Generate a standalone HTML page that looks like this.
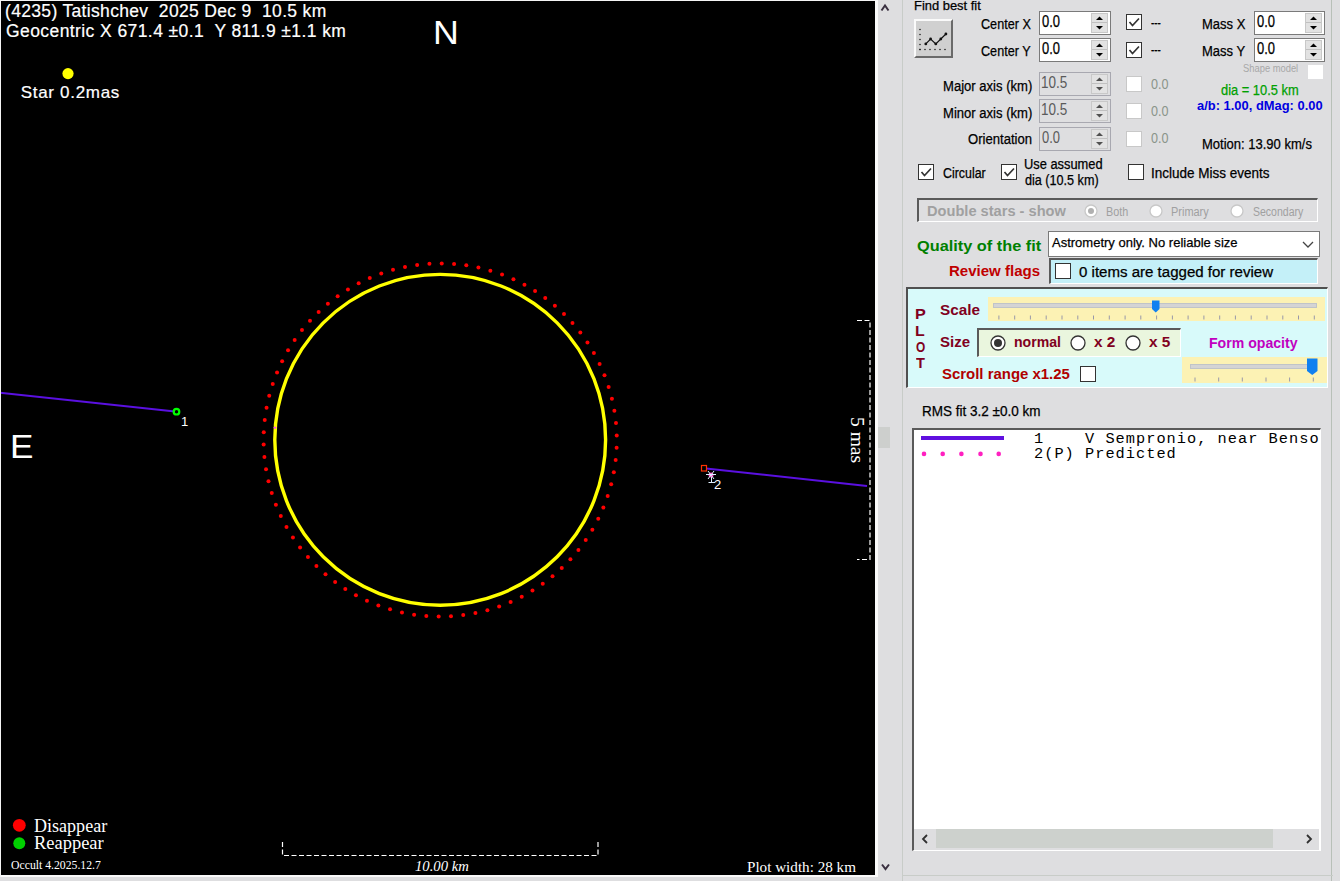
<!DOCTYPE html><html><head><meta charset="utf-8"><style>
html,body{margin:0;padding:0;width:1340px;height:881px;overflow:hidden;background:#dedee0;position:relative}
.t{position:absolute;white-space:pre}
</style></head><body>
<svg style="position:absolute;left:0;top:0" width="1340" height="881"><rect x="1" y="1" width="874" height="874" fill="#000"/><circle cx="440.2" cy="439.8" r="165.4" fill="none" stroke="#ffff00" stroke-width="3.4"/><circle cx="616.63" cy="447.70" r="2.0" fill="#ff0000"/><circle cx="615.66" cy="459.99" r="2.0" fill="#ff0000"/><circle cx="613.84" cy="472.18" r="2.0" fill="#ff0000"/><circle cx="611.17" cy="484.22" r="2.0" fill="#ff0000"/><circle cx="607.67" cy="496.04" r="2.0" fill="#ff0000"/><circle cx="603.36" cy="507.58" r="2.0" fill="#ff0000"/><circle cx="598.25" cy="518.80" r="2.0" fill="#ff0000"/><circle cx="592.36" cy="529.63" r="2.0" fill="#ff0000"/><circle cx="585.74" cy="540.03" r="2.0" fill="#ff0000"/><circle cx="578.41" cy="549.94" r="2.0" fill="#ff0000"/><circle cx="570.40" cy="559.31" r="2.0" fill="#ff0000"/><circle cx="561.76" cy="568.10" r="2.0" fill="#ff0000"/><circle cx="552.53" cy="576.27" r="2.0" fill="#ff0000"/><circle cx="542.75" cy="583.77" r="2.0" fill="#ff0000"/><circle cx="532.47" cy="590.58" r="2.0" fill="#ff0000"/><circle cx="521.74" cy="596.65" r="2.0" fill="#ff0000"/><circle cx="510.62" cy="601.95" r="2.0" fill="#ff0000"/><circle cx="499.15" cy="606.47" r="2.0" fill="#ff0000"/><circle cx="487.39" cy="610.18" r="2.0" fill="#ff0000"/><circle cx="475.41" cy="613.05" r="2.0" fill="#ff0000"/><circle cx="463.25" cy="615.09" r="2.0" fill="#ff0000"/><circle cx="450.98" cy="616.27" r="2.0" fill="#ff0000"/><circle cx="438.66" cy="616.59" r="2.0" fill="#ff0000"/><circle cx="426.34" cy="616.06" r="2.0" fill="#ff0000"/><circle cx="414.10" cy="614.66" r="2.0" fill="#ff0000"/><circle cx="401.98" cy="612.41" r="2.0" fill="#ff0000"/><circle cx="390.04" cy="609.33" r="2.0" fill="#ff0000"/><circle cx="378.35" cy="605.42" r="2.0" fill="#ff0000"/><circle cx="366.97" cy="600.70" r="2.0" fill="#ff0000"/><circle cx="355.93" cy="595.20" r="2.0" fill="#ff0000"/><circle cx="345.31" cy="588.94" r="2.0" fill="#ff0000"/><circle cx="335.15" cy="581.96" r="2.0" fill="#ff0000"/><circle cx="325.51" cy="574.29" r="2.0" fill="#ff0000"/><circle cx="316.42" cy="565.96" r="2.0" fill="#ff0000"/><circle cx="307.93" cy="557.02" r="2.0" fill="#ff0000"/><circle cx="300.09" cy="547.51" r="2.0" fill="#ff0000"/><circle cx="292.94" cy="537.47" r="2.0" fill="#ff0000"/><circle cx="286.50" cy="526.96" r="2.0" fill="#ff0000"/><circle cx="280.80" cy="516.03" r="2.0" fill="#ff0000"/><circle cx="275.89" cy="504.72" r="2.0" fill="#ff0000"/><circle cx="271.77" cy="493.10" r="2.0" fill="#ff0000"/><circle cx="268.48" cy="481.23" r="2.0" fill="#ff0000"/><circle cx="266.02" cy="469.15" r="2.0" fill="#ff0000"/><circle cx="264.41" cy="456.93" r="2.0" fill="#ff0000"/><circle cx="263.66" cy="444.62" r="2.0" fill="#ff0000"/><circle cx="263.77" cy="432.30" r="2.0" fill="#ff0000"/><circle cx="264.74" cy="420.01" r="2.0" fill="#ff0000"/><circle cx="266.56" cy="407.82" r="2.0" fill="#ff0000"/><circle cx="269.23" cy="395.78" r="2.0" fill="#ff0000"/><circle cx="272.73" cy="383.96" r="2.0" fill="#ff0000"/><circle cx="277.04" cy="372.42" r="2.0" fill="#ff0000"/><circle cx="282.15" cy="361.20" r="2.0" fill="#ff0000"/><circle cx="288.04" cy="350.37" r="2.0" fill="#ff0000"/><circle cx="294.66" cy="339.97" r="2.0" fill="#ff0000"/><circle cx="301.99" cy="330.06" r="2.0" fill="#ff0000"/><circle cx="310.00" cy="320.69" r="2.0" fill="#ff0000"/><circle cx="318.64" cy="311.90" r="2.0" fill="#ff0000"/><circle cx="327.87" cy="303.73" r="2.0" fill="#ff0000"/><circle cx="337.65" cy="296.23" r="2.0" fill="#ff0000"/><circle cx="347.93" cy="289.42" r="2.0" fill="#ff0000"/><circle cx="358.66" cy="283.35" r="2.0" fill="#ff0000"/><circle cx="369.78" cy="278.05" r="2.0" fill="#ff0000"/><circle cx="381.25" cy="273.53" r="2.0" fill="#ff0000"/><circle cx="393.01" cy="269.82" r="2.0" fill="#ff0000"/><circle cx="404.99" cy="266.95" r="2.0" fill="#ff0000"/><circle cx="417.15" cy="264.91" r="2.0" fill="#ff0000"/><circle cx="429.42" cy="263.73" r="2.0" fill="#ff0000"/><circle cx="441.74" cy="263.41" r="2.0" fill="#ff0000"/><circle cx="454.06" cy="263.94" r="2.0" fill="#ff0000"/><circle cx="466.30" cy="265.34" r="2.0" fill="#ff0000"/><circle cx="478.42" cy="267.59" r="2.0" fill="#ff0000"/><circle cx="490.36" cy="270.67" r="2.0" fill="#ff0000"/><circle cx="502.05" cy="274.58" r="2.0" fill="#ff0000"/><circle cx="513.43" cy="279.30" r="2.0" fill="#ff0000"/><circle cx="524.47" cy="284.80" r="2.0" fill="#ff0000"/><circle cx="535.09" cy="291.06" r="2.0" fill="#ff0000"/><circle cx="545.25" cy="298.04" r="2.0" fill="#ff0000"/><circle cx="554.89" cy="305.71" r="2.0" fill="#ff0000"/><circle cx="563.98" cy="314.04" r="2.0" fill="#ff0000"/><circle cx="572.47" cy="322.98" r="2.0" fill="#ff0000"/><circle cx="580.31" cy="332.49" r="2.0" fill="#ff0000"/><circle cx="587.46" cy="342.53" r="2.0" fill="#ff0000"/><circle cx="593.90" cy="353.04" r="2.0" fill="#ff0000"/><circle cx="599.60" cy="363.97" r="2.0" fill="#ff0000"/><circle cx="604.51" cy="375.28" r="2.0" fill="#ff0000"/><circle cx="608.63" cy="386.90" r="2.0" fill="#ff0000"/><circle cx="611.92" cy="398.77" r="2.0" fill="#ff0000"/><circle cx="614.38" cy="410.85" r="2.0" fill="#ff0000"/><circle cx="615.99" cy="423.07" r="2.0" fill="#ff0000"/><circle cx="616.74" cy="435.38" r="2.0" fill="#ff0000"/><path d="M273.5 427.7 h3 M275 426.5 v2.5" stroke="#ff40ff" stroke-width="1"/><line x1="0" y1="392.8" x2="175" y2="411.5" stroke="#5a10e0" stroke-width="2"/><circle cx="176.5" cy="411.7" r="2.8" fill="none" stroke="#00ff00" stroke-width="2.2"/><line x1="706" y1="468.5" x2="867" y2="486" stroke="#5a10e0" stroke-width="2"/><rect x="701.5" y="465.5" width="5" height="5.5" fill="none" stroke="#ff3000" stroke-width="1.2"/><circle cx="711" cy="475" r="2.5" fill="#ff40c0"/><path d="M706 474.5 H716 M708 471 L714 479 M714 471 L708 479 M711.5 477 V482.5 M708.5 482.5 H715" stroke="#e0f0ff" stroke-width="1"/><circle cx="68" cy="73.6" r="5.6" fill="#ffff00"/><circle cx="19.3" cy="825.3" r="6.4" fill="#ff0000"/><circle cx="19.3" cy="843.3" r="6" fill="#00d000"/><path d="M282.5 842 V855.5 H598 V842" fill="none" stroke="#fff" stroke-width="1.2" stroke-dasharray="5 2.5"/><path d="M857 320.5 H870 V559.5 H857" fill="none" stroke="#fff" stroke-width="1.2" stroke-dasharray="5 2.5"/></svg>
<div class="t" style="left:5.00px;top:3.19px;font:normal normal 17.5px/17.5px 'Liberation Sans';color:#fff;letter-spacing:0.331px;-webkit-text-stroke:0.2px #fff;">(4235) Tatishchev  2025 Dec 9  10.5 km</div>
<div class="t" style="left:6.00px;top:22.79px;font:normal normal 17.5px/17.5px 'Liberation Sans';color:#fff;letter-spacing:0.416px;-webkit-text-stroke:0.2px #fff;">Geocentric X 671.4 ±0.1  Y 811.9 ±1.1 km</div>
<div class="t" style="left:20.70px;top:83.61px;font:normal normal 17px/17px 'Liberation Sans';color:#fff;letter-spacing:0.695px;-webkit-text-stroke:0.2px #fff;">Star 0.2mas</div>
<div class="t" style="left:432.80px;top:17.49px;font:normal normal 32.5px/32.5px 'Liberation Sans';color:#fff;transform:scaleX(1.1000);transform-origin:0 0;">N</div>
<div class="t" style="left:10.00px;top:431.49px;font:normal normal 32.5px/32.5px 'Liberation Sans';color:#fff;transform:scaleX(1.0800);transform-origin:0 0;">E</div>
<div class="t" style="left:181.00px;top:415.00px;font:normal normal 13px/13px 'Liberation Sans';color:#fff;">1</div>
<div class="t" style="left:714.00px;top:478.00px;font:normal normal 13px/13px 'Liberation Sans';color:#fff;">2</div>
<div class="t" style="left:34.30px;top:816.92px;font:normal normal 18px/18px 'Liberation Serif';color:#fff;transform:scaleX(1.0031);transform-origin:0 0;">Disappear</div>
<div class="t" style="left:34.30px;top:833.92px;font:normal normal 18px/18px 'Liberation Serif';color:#fff;transform:scaleX(1.0256);transform-origin:0 0;">Reappear</div>
<div class="t" style="left:10.70px;top:858.95px;font:normal normal 12px/12px 'Liberation Serif';color:#fff;transform:scaleX(0.9773);transform-origin:0 0;">Occult 4.2025.12.7</div>
<div class="t" style="left:414.50px;top:859.11px;font:italic normal 14.8px/14.8px 'Liberation Serif';color:#fff;transform:scaleX(0.9916);transform-origin:0 0;">10.00 km</div>
<div class="t" style="left:747.40px;top:858.77px;font:normal normal 15.2px/15.2px 'Liberation Serif';color:#fff;transform:scaleX(0.9967);transform-origin:0 0;">Plot width: 28 km</div>
<div class="t" style="left:866.5px;top:417px;font:19.5px/19.5px 'Liberation Serif';color:#fff;transform:rotate(90deg);transform-origin:0 0;">5 mas</div>
<div style="position:absolute;left:875px;top:0px;width:3px;height:877px;background:#fafafa"></div>
<div style="position:absolute;left:0px;top:0px;width:875px;height:1px;background:#f4f4f4"></div>
<div style="position:absolute;left:0px;top:0px;width:1px;height:877px;background:#f4f4f4"></div>
<div style="position:absolute;left:1px;top:875px;width:874px;height:2px;background:#fafafa"></div>
<div style="position:absolute;left:878px;top:427px;width:12px;height:21px;background:#cdcfcd"></div>
<div style="position:absolute;left:902px;top:0px;width:1px;height:881px;background:#c8ccc8"></div>
<svg style="position:absolute;left:876px;top:0px" width="16" height="16"><path d="M5.5 10.5 L9 5.5 L12.5 10.5" fill="none" stroke="#3a3040" stroke-width="2"/></svg>
<svg style="position:absolute;left:876px;top:858px" width="16" height="16"><path d="M6 6.5 L9.5 11 L13 6.5" fill="none" stroke="#3a3040" stroke-width="2"/></svg>
<div class="t" style="left:913.79px;top:0.16px;font:normal normal 12.8px/12.8px 'Liberation Sans';color:#000;-webkit-text-stroke:0.25px #000;transform:scaleX(1.0093);transform-origin:0 0;">Find best fit</div>
<div style="position:absolute;left:914px;top:19px;width:39px;height:39px;box-sizing:border-box;background:#d0d0d0;border-top:2px solid #fafafa;border-left:2px solid #fafafa;border-right:2px solid #6a6a6a;border-bottom:2px solid #6a6a6a"></div>
<svg style="position:absolute;left:914px;top:19px" width="39" height="39"><circle cx="6" cy="10.5" r="0.8" fill="#222"/><circle cx="6" cy="15.5" r="0.8" fill="#222"/><circle cx="6" cy="20.5" r="0.8" fill="#222"/><circle cx="6" cy="25.5" r="0.8" fill="#222"/><circle cx="6" cy="30.5" r="0.8" fill="#222"/><circle cx="6" cy="30.5" r="0.8" fill="#222"/><circle cx="11" cy="30.5" r="0.8" fill="#222"/><circle cx="16" cy="30.5" r="0.8" fill="#222"/><circle cx="21" cy="30.5" r="0.8" fill="#222"/><circle cx="26" cy="30.5" r="0.8" fill="#222"/><circle cx="31" cy="30.5" r="0.8" fill="#222"/><polyline points="11.8,24.9 16.6,20 21.8,24.9 26.8,20 31.9,15" fill="none" stroke="#111" stroke-width="1.1"/><circle cx="11.8" cy="24.9" r="1.4" fill="#111"/><circle cx="16.6" cy="20" r="1.4" fill="#111"/><circle cx="21.8" cy="24.9" r="1.4" fill="#111"/><circle cx="26.8" cy="20" r="1.4" fill="#111"/><circle cx="31.9" cy="15" r="1.4" fill="#111"/></svg>
<div style="position:absolute;left:1039px;top:11px;width:72px;height:24px;box-sizing:border-box;background:#fff;border:1px solid #7a7a7a"></div>
<div style="position:absolute;left:1091px;top:13px;width:17px;height:20px;box-sizing:border-box;background:#e2e2e2;border:1px solid #c8c8c8"></div>
<div style="position:absolute;left:1092px;top:22px;width:15px;height:1px;background:#c0c0c0"></div>
<svg style="position:absolute;left:1091px;top:11px" width="17" height="24"><path d="M5 9.0 L8.5 5.5 L12 9.0 Z" fill="#000"/><path d="M5 15.0 L8.5 18.5 L12 15.0 Z" fill="#000"/></svg>
<div class="t" style="left:1042.00px;top:12.89px;font:normal normal 16.2px/16.2px 'Liberation Sans';color:#000;-webkit-text-stroke:0.25px #000;transform:scaleX(0.8000);transform-origin:0 0;">0.0</div>
<div style="position:absolute;left:1039px;top:38px;width:72px;height:24px;box-sizing:border-box;background:#fff;border:1px solid #7a7a7a"></div>
<div style="position:absolute;left:1091px;top:40px;width:17px;height:20px;box-sizing:border-box;background:#e2e2e2;border:1px solid #c8c8c8"></div>
<div style="position:absolute;left:1092px;top:49px;width:15px;height:1px;background:#c0c0c0"></div>
<svg style="position:absolute;left:1091px;top:38px" width="17" height="24"><path d="M5 9.0 L8.5 5.5 L12 9.0 Z" fill="#000"/><path d="M5 15.0 L8.5 18.5 L12 15.0 Z" fill="#000"/></svg>
<div class="t" style="left:1042.00px;top:39.89px;font:normal normal 16.2px/16.2px 'Liberation Sans';color:#000;-webkit-text-stroke:0.25px #000;transform:scaleX(0.8000);transform-origin:0 0;">0.0</div>
<div style="position:absolute;left:1254px;top:11px;width:71px;height:24px;box-sizing:border-box;background:#fff;border:1px solid #7a7a7a"></div>
<div style="position:absolute;left:1305px;top:13px;width:17px;height:20px;box-sizing:border-box;background:#e2e2e2;border:1px solid #c8c8c8"></div>
<div style="position:absolute;left:1306px;top:22px;width:15px;height:1px;background:#c0c0c0"></div>
<svg style="position:absolute;left:1305px;top:11px" width="17" height="24"><path d="M5 9.0 L8.5 5.5 L12 9.0 Z" fill="#000"/><path d="M5 15.0 L8.5 18.5 L12 15.0 Z" fill="#000"/></svg>
<div class="t" style="left:1257.00px;top:12.89px;font:normal normal 16.2px/16.2px 'Liberation Sans';color:#000;-webkit-text-stroke:0.25px #000;transform:scaleX(0.8000);transform-origin:0 0;">0.0</div>
<div style="position:absolute;left:1254px;top:38px;width:71px;height:24px;box-sizing:border-box;background:#fff;border:1px solid #7a7a7a"></div>
<div style="position:absolute;left:1305px;top:40px;width:17px;height:20px;box-sizing:border-box;background:#e2e2e2;border:1px solid #c8c8c8"></div>
<div style="position:absolute;left:1306px;top:49px;width:15px;height:1px;background:#c0c0c0"></div>
<svg style="position:absolute;left:1305px;top:38px" width="17" height="24"><path d="M5 9.0 L8.5 5.5 L12 9.0 Z" fill="#000"/><path d="M5 15.0 L8.5 18.5 L12 15.0 Z" fill="#000"/></svg>
<div class="t" style="left:1257.00px;top:39.89px;font:normal normal 16.2px/16.2px 'Liberation Sans';color:#000;-webkit-text-stroke:0.25px #000;transform:scaleX(0.8000);transform-origin:0 0;">0.0</div>
<div style="position:absolute;left:1039px;top:72px;width:72px;height:24px;box-sizing:border-box;background:#dedee0;border:1px solid #a8a8b0"></div>
<div style="position:absolute;left:1091px;top:74px;width:17px;height:20px;box-sizing:border-box;background:#e2e2e2;border:1px solid #c8c8c8"></div>
<div style="position:absolute;left:1092px;top:83px;width:15px;height:1px;background:#c0c0c0"></div>
<svg style="position:absolute;left:1091px;top:72px" width="17" height="24"><path d="M5 9.0 L8.5 5.5 L12 9.0 Z" fill="#505050"/><path d="M5 15.0 L8.5 18.5 L12 15.0 Z" fill="#505050"/></svg>
<div class="t" style="left:1041.17px;top:73.89px;font:normal normal 16.2px/16.2px 'Liberation Sans';color:#5a5a5a;transform:scaleX(0.8327);transform-origin:0 0;">10.5</div>
<div style="position:absolute;left:1039px;top:99px;width:72px;height:24px;box-sizing:border-box;background:#dedee0;border:1px solid #a8a8b0"></div>
<div style="position:absolute;left:1091px;top:101px;width:17px;height:20px;box-sizing:border-box;background:#e2e2e2;border:1px solid #c8c8c8"></div>
<div style="position:absolute;left:1092px;top:110px;width:15px;height:1px;background:#c0c0c0"></div>
<svg style="position:absolute;left:1091px;top:99px" width="17" height="24"><path d="M5 9.0 L8.5 5.5 L12 9.0 Z" fill="#505050"/><path d="M5 15.0 L8.5 18.5 L12 15.0 Z" fill="#505050"/></svg>
<div class="t" style="left:1041.17px;top:100.89px;font:normal normal 16.2px/16.2px 'Liberation Sans';color:#5a5a5a;transform:scaleX(0.8327);transform-origin:0 0;">10.5</div>
<div style="position:absolute;left:1039px;top:127px;width:72px;height:24px;box-sizing:border-box;background:#dedee0;border:1px solid #a8a8b0"></div>
<div style="position:absolute;left:1091px;top:129px;width:17px;height:20px;box-sizing:border-box;background:#e2e2e2;border:1px solid #c8c8c8"></div>
<div style="position:absolute;left:1092px;top:138px;width:15px;height:1px;background:#c0c0c0"></div>
<svg style="position:absolute;left:1091px;top:127px" width="17" height="24"><path d="M5 9.0 L8.5 5.5 L12 9.0 Z" fill="#505050"/><path d="M5 15.0 L8.5 18.5 L12 15.0 Z" fill="#505050"/></svg>
<div class="t" style="left:1042.00px;top:128.89px;font:normal normal 16.2px/16.2px 'Liberation Sans';color:#5a5a5a;transform:scaleX(0.8000);transform-origin:0 0;">0.0</div>
<div class="t" style="left:980.80px;top:16.95px;font:normal normal 14px/14px 'Liberation Sans';color:#000;-webkit-text-stroke:0.25px #000;transform:scaleX(0.9014);transform-origin:0 0;">Center X</div>
<div class="t" style="left:980.80px;top:43.95px;font:normal normal 14px/14px 'Liberation Sans';color:#000;-webkit-text-stroke:0.25px #000;transform:scaleX(0.9014);transform-origin:0 0;">Center Y</div>
<div style="position:absolute;left:1126px;top:14px;width:16px;height:16px;box-sizing:border-box;background:#fff;border:1.5px solid #333"></div>
<svg style="position:absolute;left:1126px;top:14px" width="16" height="16"><path d="M3.5 8 L6.5 11.5 L13 4.5" fill="none" stroke="#333" stroke-width="1.7"/></svg>
<div style="position:absolute;left:1126px;top:42px;width:16px;height:16px;box-sizing:border-box;background:#fff;border:1.5px solid #333"></div>
<svg style="position:absolute;left:1126px;top:42px" width="16" height="16"><path d="M3.5 8 L6.5 11.5 L13 4.5" fill="none" stroke="#333" stroke-width="1.7"/></svg>
<div class="t" style="left:1151.00px;top:15.65px;font:normal normal 14px/14px 'Liberation Sans';color:#000;-webkit-text-stroke:0.25px #000;transform:scaleX(0.6981);transform-origin:0 0;">---</div>
<div class="t" style="left:1151.00px;top:43.15px;font:normal normal 14px/14px 'Liberation Sans';color:#000;-webkit-text-stroke:0.25px #000;transform:scaleX(0.6981);transform-origin:0 0;">---</div>
<div class="t" style="left:1202.07px;top:17.15px;font:normal normal 14px/14px 'Liberation Sans';color:#000;-webkit-text-stroke:0.25px #000;transform:scaleX(0.9280);transform-origin:0 0;">Mass X</div>
<div class="t" style="left:1202.07px;top:44.15px;font:normal normal 14px/14px 'Liberation Sans';color:#000;-webkit-text-stroke:0.25px #000;transform:scaleX(0.9280);transform-origin:0 0;">Mass Y</div>
<div class="t" style="left:1243.00px;top:64.03px;font:normal normal 10px/10px 'Liberation Sans';color:#a8a8a8;transform:scaleX(0.9368);transform-origin:0 0;">Shape model</div>
<div style="position:absolute;left:1308px;top:65px;width:15px;height:14px;background:#fff"></div>
<div class="t" style="left:943.07px;top:79.15px;font:normal normal 14px/14px 'Liberation Sans';color:#000;-webkit-text-stroke:0.25px #000;transform:scaleX(0.9329);transform-origin:0 0;">Major axis (km)</div>
<div class="t" style="left:943.07px;top:106.15px;font:normal normal 14px/14px 'Liberation Sans';color:#000;-webkit-text-stroke:0.25px #000;transform:scaleX(0.9329);transform-origin:0 0;">Minor axis (km)</div>
<div class="t" style="left:968.20px;top:132.15px;font:normal normal 14px/14px 'Liberation Sans';color:#000;-webkit-text-stroke:0.25px #000;transform:scaleX(0.9351);transform-origin:0 0;">Orientation</div>
<div style="position:absolute;left:1126px;top:76px;width:16px;height:16px;box-sizing:border-box;background:#fff;border:1.5px solid #c8c8c8"></div>
<div style="position:absolute;left:1126px;top:103px;width:16px;height:16px;box-sizing:border-box;background:#fff;border:1.5px solid #c8c8c8"></div>
<div style="position:absolute;left:1126px;top:131px;width:16px;height:16px;box-sizing:border-box;background:#fff;border:1.5px solid #c8c8c8"></div>
<div class="t" style="left:1150.50px;top:76.75px;font:normal normal 14px/14px 'Liberation Sans';color:#8a948a;transform:scaleX(0.8996);transform-origin:0 0;">0.0</div>
<div class="t" style="left:1150.50px;top:103.75px;font:normal normal 14px/14px 'Liberation Sans';color:#8a948a;transform:scaleX(0.8996);transform-origin:0 0;">0.0</div>
<div class="t" style="left:1150.50px;top:131.15px;font:normal normal 14px/14px 'Liberation Sans';color:#8a948a;transform:scaleX(0.8996);transform-origin:0 0;">0.0</div>
<div class="t" style="left:1221.00px;top:82.65px;font:normal normal 14px/14px 'Liberation Sans';color:#00a000;-webkit-text-stroke:0.25px #00a000;transform:scaleX(0.9191);transform-origin:0 0;">dia = 10.5 km</div>
<div class="t" style="left:1197.00px;top:100.42px;font:normal bold 12.5px/12.5px 'Liberation Sans';color:#0000e0;transform:scaleX(1.0336);transform-origin:0 0;">a/b: 1.00, dMag: 0.00</div>
<div class="t" style="left:1202.07px;top:137.15px;font:normal normal 14px/14px 'Liberation Sans';color:#000;-webkit-text-stroke:0.25px #000;transform:scaleX(0.9294);transform-origin:0 0;">Motion: 13.90 km/s</div>
<div style="position:absolute;left:1331px;top:0px;width:1px;height:881px;background:#b8c0b8"></div>
<div style="position:absolute;left:918px;top:164px;width:16px;height:16px;box-sizing:border-box;background:#fff;border:1.5px solid #333"></div>
<svg style="position:absolute;left:918px;top:164px" width="16" height="16"><path d="M3.5 8 L6.5 11.5 L13 4.5" fill="none" stroke="#333" stroke-width="1.7"/></svg>
<div class="t" style="left:943.00px;top:165.95px;font:normal normal 14px/14px 'Liberation Sans';color:#000;-webkit-text-stroke:0.25px #000;transform:scaleX(0.8854);transform-origin:0 0;">Circular</div>
<div style="position:absolute;left:1001px;top:164px;width:16px;height:16px;box-sizing:border-box;background:#fff;border:1.5px solid #333"></div>
<svg style="position:absolute;left:1001px;top:164px" width="16" height="16"><path d="M3.5 8 L6.5 11.5 L13 4.5" fill="none" stroke="#333" stroke-width="1.7"/></svg>
<div class="t" style="left:1024.08px;top:157.15px;font:normal normal 14px/14px 'Liberation Sans';color:#000;-webkit-text-stroke:0.25px #000;transform:scaleX(0.9188);transform-origin:0 0;">Use assumed</div>
<div class="t" style="left:1025.00px;top:172.65px;font:normal normal 14px/14px 'Liberation Sans';color:#000;-webkit-text-stroke:0.25px #000;transform:scaleX(0.9009);transform-origin:0 0;">dia (10.5 km)</div>
<div style="position:absolute;left:1128px;top:164px;width:16px;height:16px;box-sizing:border-box;background:#fff;border:1.5px solid #333"></div>
<div class="t" style="left:1151.04px;top:165.95px;font:normal normal 14px/14px 'Liberation Sans';color:#000;-webkit-text-stroke:0.25px #000;transform:scaleX(0.9644);transform-origin:0 0;">Include Miss events</div>
<div style="position:absolute;left:917px;top:198px;width:401px;height:24px;box-sizing:border-box;border-top:2px solid #5a5a5a;border-left:2px solid #5a5a5a;border-bottom:1px solid #fff;border-right:1px solid #fff"></div>
<div class="t" style="left:927.00px;top:203.65px;font:normal bold 14px/14px 'Liberation Sans';color:#a0a0a0;transform:scaleX(1.0441);transform-origin:0 0;">Double stars - show</div>
<svg style="position:absolute;left:1084px;top:204px" width="14" height="14"><circle cx="7.0" cy="7.0" r="6.0" fill="#fff" stroke="#c8c8c8" stroke-width="1.3"/><circle cx="7.0" cy="7.0" r="3.0" fill="#b0b0b0"/></svg>
<div class="t" style="left:1106.02px;top:206.39px;font:normal normal 12.3px/12.3px 'Liberation Sans';color:#a0a0a0;transform:scaleX(0.8791);transform-origin:0 0;">Both</div>
<svg style="position:absolute;left:1149px;top:204px" width="14" height="14"><circle cx="7.0" cy="7.0" r="6.0" fill="#fff" stroke="#c8c8c8" stroke-width="1.3"/></svg>
<div class="t" style="left:1170.51px;top:206.39px;font:normal normal 12.3px/12.3px 'Liberation Sans';color:#a0a0a0;transform:scaleX(0.8909);transform-origin:0 0;">Primary</div>
<svg style="position:absolute;left:1230px;top:204px" width="14" height="14"><circle cx="7.0" cy="7.0" r="6.0" fill="#fff" stroke="#c8c8c8" stroke-width="1.3"/></svg>
<div class="t" style="left:1253.00px;top:206.39px;font:normal normal 12.3px/12.3px 'Liberation Sans';color:#a0a0a0;transform:scaleX(0.8551);transform-origin:0 0;">Secondary</div>
<div class="t" style="left:916.80px;top:239.06px;font:normal bold 14.7px/14.7px 'Liberation Sans';color:#008000;transform:scaleX(1.1109);transform-origin:0 0;">Quality of the fit</div>
<div style="position:absolute;left:1048px;top:231px;width:272px;height:26px;box-sizing:border-box;background:#fff;border:1px solid #7a7a7a"></div>
<div class="t" style="left:1052.00px;top:236.37px;font:normal normal 13.5px/13.5px 'Liberation Sans';color:#000;-webkit-text-stroke:0.25px #000;transform:scaleX(0.9633);transform-origin:0 0;">Astrometry only. No reliable size</div>
<svg style="position:absolute;left:1300px;top:238px" width="16" height="12"><path d="M3 4 L8 9 L13 4" fill="none" stroke="#444" stroke-width="1.3"/></svg>
<div class="t" style="left:949.20px;top:264.16px;font:normal bold 14.7px/14.7px 'Liberation Sans';color:#c00000;transform:scaleX(1.0235);transform-origin:0 0;">Review flags</div>
<div style="position:absolute;left:1049px;top:258px;width:269px;height:26px;box-sizing:border-box;background:#c4f0f8;border-top:2px solid #5a5a5a;border-left:2px solid #5a5a5a;border-bottom:1px solid #fff;border-right:1px solid #fff"></div>
<div style="position:absolute;left:1055px;top:263px;width:16px;height:16px;box-sizing:border-box;background:#fff;border:1.5px solid #333"></div>
<div class="t" style="left:1079.00px;top:264.65px;font:normal normal 14px/14px 'Liberation Sans';color:#000;-webkit-text-stroke:0.25px #000;transform:scaleX(1.0749);transform-origin:0 0;">0 items are tagged for review</div>
<div style="position:absolute;left:906px;top:287px;width:422px;height:101px;box-sizing:border-box;background:#d8fafa;border-top:2px solid #505050;border-left:2px solid #505050;border-bottom:1px solid #fff;border-right:1px solid #fff"></div>
<div class="t" style="left:914.76px;top:306.08px;font:normal bold 15.5px/15.5px 'Liberation Sans';color:#800020;transform:scaleX(1.0444);transform-origin:0 0;">P</div>
<div class="t" style="left:914.77px;top:322.88px;font:normal bold 15.5px/15.5px 'Liberation Sans';color:#800020;transform:scaleX(1.0250);transform-origin:0 0;">L</div>
<div class="t" style="left:915.80px;top:338.78px;font:normal bold 15.5px/15.5px 'Liberation Sans';color:#800020;transform:scaleX(0.7667);transform-origin:0 0;">O</div>
<div class="t" style="left:915.80px;top:354.68px;font:normal bold 15.5px/15.5px 'Liberation Sans';color:#800020;transform:scaleX(0.9400);transform-origin:0 0;">T</div>
<div class="t" style="left:940.30px;top:301.50px;font:normal bold 15px/15px 'Liberation Sans';color:#800020;transform:scaleX(1.0191);transform-origin:0 0;">Scale</div>
<div class="t" style="left:940.30px;top:333.90px;font:normal bold 15px/15px 'Liberation Sans';color:#800020;transform:scaleX(1.0009);transform-origin:0 0;">Size</div>
<div class="t" style="left:941.80px;top:366.38px;font:normal bold 15.5px/15.5px 'Liberation Sans';color:#b00000;transform:scaleX(0.9635);transform-origin:0 0;">Scroll range x1.25</div>
<div style="position:absolute;left:1080px;top:366px;width:16px;height:16px;box-sizing:border-box;background:#fff;border:1.5px solid #333"></div>
<div style="position:absolute;left:988px;top:296.5px;width:337px;height:24px;background:#fcf2b4"></div>
<div style="position:absolute;left:993px;top:303px;width:324px;height:5px;box-sizing:border-box;background:#d4d4d4;border:1px solid #c0c4c8"></div>
<svg style="position:absolute;left:988px;top:296px" width="336" height="25"><line x1="10.9" y1="19.5" x2="10.9" y2="23.5" stroke="#9898a8" stroke-width="1"/><line x1="26.7" y1="19.5" x2="26.7" y2="23.5" stroke="#9898a8" stroke-width="1"/><line x1="42.4" y1="19.5" x2="42.4" y2="23.5" stroke="#9898a8" stroke-width="1"/><line x1="58.2" y1="19.5" x2="58.2" y2="23.5" stroke="#9898a8" stroke-width="1"/><line x1="74.0" y1="19.5" x2="74.0" y2="23.5" stroke="#9898a8" stroke-width="1"/><line x1="89.8" y1="19.5" x2="89.8" y2="23.5" stroke="#9898a8" stroke-width="1"/><line x1="105.5" y1="19.5" x2="105.5" y2="23.5" stroke="#9898a8" stroke-width="1"/><line x1="121.3" y1="19.5" x2="121.3" y2="23.5" stroke="#9898a8" stroke-width="1"/><line x1="137.1" y1="19.5" x2="137.1" y2="23.5" stroke="#9898a8" stroke-width="1"/><line x1="152.8" y1="19.5" x2="152.8" y2="23.5" stroke="#9898a8" stroke-width="1"/><line x1="168.6" y1="19.5" x2="168.6" y2="23.5" stroke="#9898a8" stroke-width="1"/><line x1="184.4" y1="19.5" x2="184.4" y2="23.5" stroke="#9898a8" stroke-width="1"/><line x1="200.1" y1="19.5" x2="200.1" y2="23.5" stroke="#9898a8" stroke-width="1"/><line x1="215.9" y1="19.5" x2="215.9" y2="23.5" stroke="#9898a8" stroke-width="1"/><line x1="231.7" y1="19.5" x2="231.7" y2="23.5" stroke="#9898a8" stroke-width="1"/><line x1="247.4" y1="19.5" x2="247.4" y2="23.5" stroke="#9898a8" stroke-width="1"/><line x1="263.2" y1="19.5" x2="263.2" y2="23.5" stroke="#9898a8" stroke-width="1"/><line x1="279.0" y1="19.5" x2="279.0" y2="23.5" stroke="#9898a8" stroke-width="1"/><line x1="294.8" y1="19.5" x2="294.8" y2="23.5" stroke="#9898a8" stroke-width="1"/><line x1="310.5" y1="19.5" x2="310.5" y2="23.5" stroke="#9898a8" stroke-width="1"/><line x1="326.3" y1="19.5" x2="326.3" y2="23.5" stroke="#9898a8" stroke-width="1"/><path d="M164 4.5 H171.5 V13 L167.75 16.5 L164 13 Z" fill="#1080f0"/></svg>
<div style="position:absolute;left:977px;top:328px;width:204px;height:29px;box-sizing:border-box;background:#eaf6de;border-top:2px solid #5a5a5a;border-left:2px solid #5a5a5a;border-bottom:1px solid #fff;border-right:1px solid #fff"></div>
<svg style="position:absolute;left:989.5px;top:334.5px" width="16" height="16"><circle cx="8.0" cy="8.0" r="7.0" fill="#fff" stroke="#333" stroke-width="1.3"/><circle cx="8.0" cy="8.0" r="4.0" fill="#333"/></svg>
<div class="t" style="left:1014.00px;top:334.75px;font:normal bold 14px/14px 'Liberation Sans';color:#800020;transform:scaleX(1.0047);transform-origin:0 0;">normal</div>
<svg style="position:absolute;left:1069.5px;top:334.5px" width="16" height="16"><circle cx="8.0" cy="8.0" r="7.0" fill="#fff" stroke="#333" stroke-width="1.3"/></svg>
<div class="t" style="left:1094.00px;top:333.90px;font:normal bold 15px/15px 'Liberation Sans';color:#800020;transform:scaleX(1.0239);transform-origin:0 0;">x 2</div>
<svg style="position:absolute;left:1124.5px;top:334.5px" width="16" height="16"><circle cx="8.0" cy="8.0" r="7.0" fill="#fff" stroke="#333" stroke-width="1.3"/></svg>
<div class="t" style="left:1149.00px;top:333.90px;font:normal bold 15px/15px 'Liberation Sans';color:#800020;transform:scaleX(1.0239);transform-origin:0 0;">x 5</div>
<div class="t" style="left:1209.00px;top:335.67px;font:normal bold 14.8px/14.8px 'Liberation Sans';color:#c000c0;transform:scaleX(0.9533);transform-origin:0 0;">Form opacity</div>
<div style="position:absolute;left:1182px;top:357px;width:145px;height:26px;background:#fcf2b4"></div>
<div style="position:absolute;left:1190px;top:364px;width:122px;height:5px;box-sizing:border-box;background:#d4d4d4;border:1px solid #c0c4c8"></div>
<svg style="position:absolute;left:1182px;top:357px" width="145" height="26"><line x1="13.0" y1="20.5" x2="13.0" y2="24.5" stroke="#9898a8" stroke-width="1"/><line x1="36.7" y1="20.5" x2="36.7" y2="24.5" stroke="#9898a8" stroke-width="1"/><line x1="60.3" y1="20.5" x2="60.3" y2="24.5" stroke="#9898a8" stroke-width="1"/><line x1="84.0" y1="20.5" x2="84.0" y2="24.5" stroke="#9898a8" stroke-width="1"/><line x1="107.6" y1="20.5" x2="107.6" y2="24.5" stroke="#9898a8" stroke-width="1"/><line x1="131.3" y1="20.5" x2="131.3" y2="24.5" stroke="#9898a8" stroke-width="1"/><path d="M125 1.5 H135.5 V14 L130.25 18 L125 14 Z" fill="#1080f0"/></svg>
<div class="t" style="left:922.03px;top:403.75px;font:normal normal 14px/14px 'Liberation Sans';color:#000;-webkit-text-stroke:0.25px #000;transform:scaleX(0.9656);transform-origin:0 0;">RMS fit 3.2 ±0.0 km</div>
<div style="position:absolute;left:912px;top:428px;width:409px;height:423px;box-sizing:border-box;background:#fff;border-top:2px solid #5a5a5a;border-left:2px solid #5a5a5a;border-right:1px solid #fff;border-bottom:1px solid #fff"></div>
<div style="position:absolute;left:921px;top:436px;width:83px;height:4px;background:#6010e0"></div>
<svg style="position:absolute;left:912px;top:428px" width="409" height="40"><circle cx="12" cy="25.899999999999977" r="2.3" fill="#ff20c0"/><circle cx="30.700000000000045" cy="25.899999999999977" r="2.3" fill="#ff20c0"/><circle cx="49.39999999999998" cy="25.899999999999977" r="2.3" fill="#ff20c0"/><circle cx="68.5" cy="25.899999999999977" r="2.3" fill="#ff20c0"/><circle cx="86.70000000000005" cy="25.899999999999977" r="2.3" fill="#ff20c0"/></svg>
<div style="position:absolute;left:914px;top:430px;width:405px;height:40px;overflow:hidden">
<div class="t" style="left:120.00px;top:2.27px;font:normal normal 15.3px/15.3px 'Liberation Mono';color:#000;letter-spacing:1.02px;">1    V Sempronio, near Benso</div>
<div class="t" style="left:120.00px;top:17.27px;font:normal normal 15.3px/15.3px 'Liberation Mono';color:#000;letter-spacing:1.02px;">2(P) Predicted</div>
</div>
<div style="position:absolute;left:914px;top:829px;width:405px;height:21px;background:#dedee0"></div>
<div style="position:absolute;left:936px;top:829px;width:337px;height:19px;background:#cdd1cd"></div>
<svg style="position:absolute;left:918px;top:832px" width="14" height="14"><path d="M9 3 L5 7 L9 11" fill="none" stroke="#303030" stroke-width="1.8"/></svg>
<svg style="position:absolute;left:1302px;top:832px" width="14" height="14"><path d="M5 3 L9 7 L5 11" fill="none" stroke="#303030" stroke-width="1.8"/></svg>
<div style="position:absolute;left:903px;top:875px;width:430px;height:1px;background:#c8ccc8"></div>
</body></html>
